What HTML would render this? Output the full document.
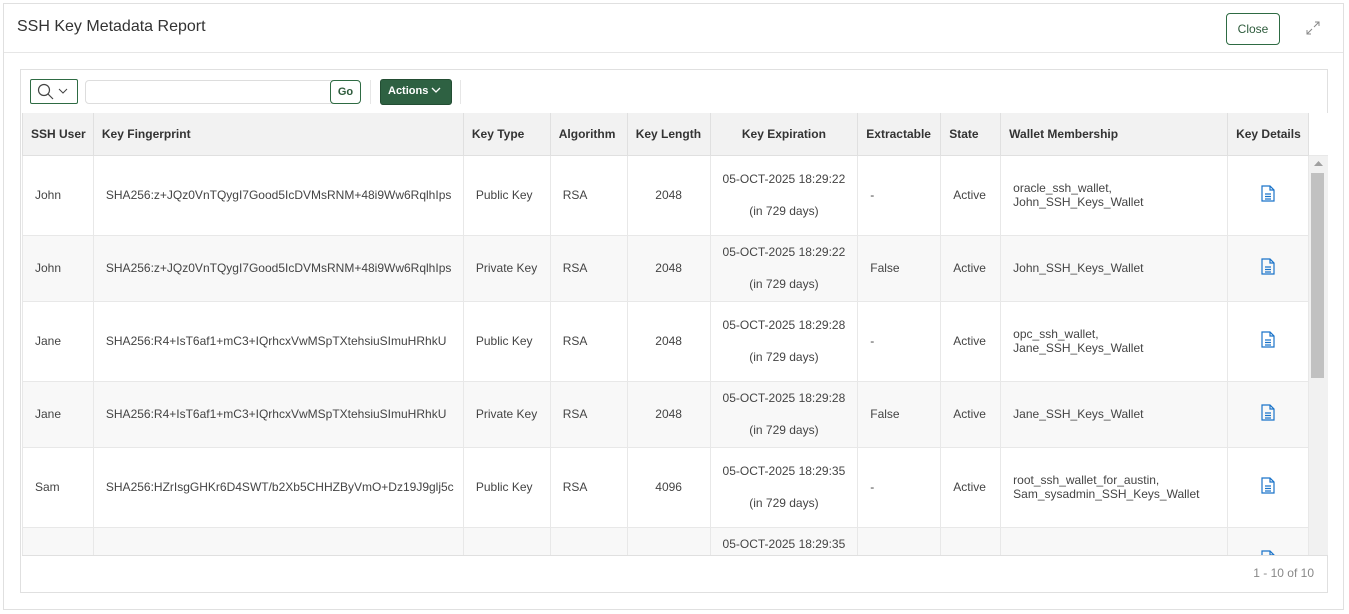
<!DOCTYPE html>
<html><head><style>
*{box-sizing:border-box;margin:0;padding:0}
body{width:1349px;height:614px;background:#fff;font-family:"Liberation Sans",sans-serif;color:#333;position:relative;overflow:hidden}
.dlg{position:absolute;left:3px;top:3px;width:1341px;height:607px;border:1px solid #e0e0e0;background:#fff}
.hdr{position:absolute;left:0;top:0;right:0;height:49px;border-bottom:1px solid #e6e6e6}
.title{position:absolute;left:13px;top:14px;font-size:16px;color:#333}
.close{position:absolute;left:1222px;top:9px;width:54px;height:32px;border:1px solid #2e6b43;border-radius:4px;font-size:12px;color:#2e5b3c;text-align:center;line-height:30px}
.region{position:absolute;left:20px;top:69px;width:1308px;height:524px;border:1px solid #e0e0e0;background:#fff}
.sbtn{position:absolute;left:9px;top:9px;width:48px;height:25px;border:1px solid #2e6b43;border-radius:2px}
.inp{position:absolute;left:64px;top:10px;width:275px;height:24px;border:1px solid #ddd;border-radius:4px}
.go{position:absolute;left:309px;top:10px;width:31px;height:24px;border:1px solid #2e6b43;border-radius:4px;font-size:11px;font-weight:bold;text-align:center;line-height:22px;color:#2e5b3c;background:#fff}
.act{position:absolute;left:359px;top:9px;width:72px;height:26px;background:#2e6142;border:1px solid #234d33;border-radius:3px;color:#fff;font-size:11px;font-weight:bold;line-height:23px;padding-left:7px}
.sep{position:absolute;top:10px;width:1px;height:24px;background:#e6e6e6}
.tw{position:absolute;left:1px;top:43px;width:1306px;height:443px;overflow:hidden;border-bottom:1px solid #e0e0e0}
table{border-collapse:collapse;table-layout:fixed;position:absolute;left:0;top:0}
th{height:42px;background:#f2f2f2;font-size:12px;font-weight:bold;color:#333;border:1px solid #e0e0e0;border-top:none;text-align:left;padding-left:8px}
td{font-size:12px;color:#444;border:1px solid #e8e8e8;padding-left:12px}
tr.a td{height:80px;background:#fff}
tr.b td{height:66px;background:#f8f8f8}
.c{text-align:center;padding-left:0}
.exp{text-align:center;padding-left:0;line-height:16px}
.sb{position:absolute;left:1287px;top:43px;width:19px;height:442px;background:#f1f1f1}
.thumb{position:absolute;left:2px;top:17px;width:13px;height:205px;background:#c1c1c1}
.foot{position:absolute;right:13px;bottom:12px;font-size:12px;color:#888}
</style></head><body>
<div class="dlg">
 <div class="hdr"><div class="title">SSH Key Metadata Report</div>
 <div class="close">Close</div>
 <svg style="position:absolute;left:1302px;top:17px" width="14" height="14" viewBox="0 0 14 14" fill="none" stroke="#888" stroke-width="1"><path d="M8 6L13 1M9 1h4v4M6 8L1 13M1 9v4h4"/></svg>
 </div>
</div>
<div class="region">
 <div class="sbtn"><svg style="position:absolute;left:6px;top:3px" width="18" height="18" viewBox="0 0 18 18" fill="none" stroke="#444" stroke-width="1.2"><circle cx="7" cy="7" r="5.5"/><path d="M11 11l5 5"/></svg><svg style="position:absolute;left:27px;top:8px" width="10" height="7" viewBox="0 0 10 7" fill="none" stroke="#444"><path d="M1 1l4 4 4-4"/></svg></div>
 <div class="inp"></div><div class="go">Go</div>
 <div class="sep" style="left:349px"></div>
 <div class="act">Actions <svg width="10" height="7" viewBox="0 0 10 7" fill="none" stroke="#fff" stroke-width="1.3"><path d="M1 1l4 4 4-4"/></svg></div>
 <div class="sep" style="left:439px"></div>
 <div class="tw">
 <table>
 <colgroup><col style="width:71px"><col style="width:370px"><col style="width:87px"><col style="width:77px"><col style="width:83px"><col style="width:148px"><col style="width:83px"><col style="width:60px"><col style="width:227px"><col style="width:81px"><col style="width:19px"></colgroup>
 <tr><th>SSH User</th><th>Key Fingerprint</th><th>Key Type</th><th>Algorithm</th><th>Key Length</th><th class="c">Key Expiration</th><th>Extractable</th><th>State</th><th>Wallet Membership</th><th>Key Details</th><th style="border:none;background:#fff"></th></tr>
 <tr class="a"><td>John</td><td>SHA256:z+JQz0VnTQygI7Good5IcDVMsRNM+48i9Ww6RqlhIps</td><td>Public Key</td><td>RSA</td><td class="c">2048</td><td class="exp">05-OCT-2025 18:29:22<br><br>(in 729 days)</td><td>-</td><td>Active</td><td>oracle_ssh_wallet,<br>John_SSH_Keys_Wallet</td><td class="c">ICON</td><td></td></tr>
 <tr class="b"><td>John</td><td>SHA256:z+JQz0VnTQygI7Good5IcDVMsRNM+48i9Ww6RqlhIps</td><td>Private Key</td><td>RSA</td><td class="c">2048</td><td class="exp">05-OCT-2025 18:29:22<br><br>(in 729 days)</td><td>False</td><td>Active</td><td>John_SSH_Keys_Wallet</td><td class="c">ICON</td><td></td></tr>
 <tr class="a"><td>Jane</td><td>SHA256:R4+IsT6af1+mC3+IQrhcxVwMSpTXtehsiuSImuHRhkU</td><td>Public Key</td><td>RSA</td><td class="c">2048</td><td class="exp">05-OCT-2025 18:29:28<br><br>(in 729 days)</td><td>-</td><td>Active</td><td>opc_ssh_wallet,<br>Jane_SSH_Keys_Wallet</td><td class="c">ICON</td><td></td></tr>
 <tr class="b"><td>Jane</td><td>SHA256:R4+IsT6af1+mC3+IQrhcxVwMSpTXtehsiuSImuHRhkU</td><td>Private Key</td><td>RSA</td><td class="c">2048</td><td class="exp">05-OCT-2025 18:29:28<br><br>(in 729 days)</td><td>False</td><td>Active</td><td>Jane_SSH_Keys_Wallet</td><td class="c">ICON</td><td></td></tr>
 <tr class="a"><td>Sam</td><td>SHA256:HZrIsgGHKr6D4SWT/b2Xb5CHHZByVmO+Dz19J9glj5c</td><td>Public Key</td><td>RSA</td><td class="c">4096</td><td class="exp">05-OCT-2025 18:29:35<br><br>(in 729 days)</td><td>-</td><td>Active</td><td>root_ssh_wallet_for_austin,<br>Sam_sysadmin_SSH_Keys_Wallet</td><td class="c">ICON</td><td></td></tr>
 <tr class="b"><td>Sam</td><td>SHA256:HZrIsgGHKr6D4SWT/b2Xb5CHHZByVmO+Dz19J9glj5c</td><td>Private Key</td><td>RSA</td><td class="c">4096</td><td class="exp">05-OCT-2025 18:29:35<br><br>(in 729 days)</td><td>False</td><td>Active</td><td>Sam_sysadmin_SSH_Keys_Wallet</td><td class="c">ICON</td><td></td></tr>
 </table>
 <div class="sb"><svg style="position:absolute;left:5px;top:5px" width="9" height="5"><path d="M0 5L4.5 0 9 5z" fill="#a0a0a0"/></svg><div class="thumb"></div><svg style="position:absolute;left:5px;top:430px" width="9" height="5"><path d="M0 0L4.5 5 9 0z" fill="#505050"/></svg></div>
 </div>
 <div class="foot">1 - 10 of 10</div>
</div>
<script>
document.querySelectorAll('td.c').forEach(function(t){if(t.textContent==='ICON')t.innerHTML='<svg width="14" height="17" viewBox="0 0 14 17" fill="none" stroke="#1a73c9" stroke-width="1.2"><path d="M1 1h8l4 4v11H1z"/><path d="M9 1v4h4M4 9h6M4 11.5h6M4 14h6"/></svg>';});
</script>
</body></html>
